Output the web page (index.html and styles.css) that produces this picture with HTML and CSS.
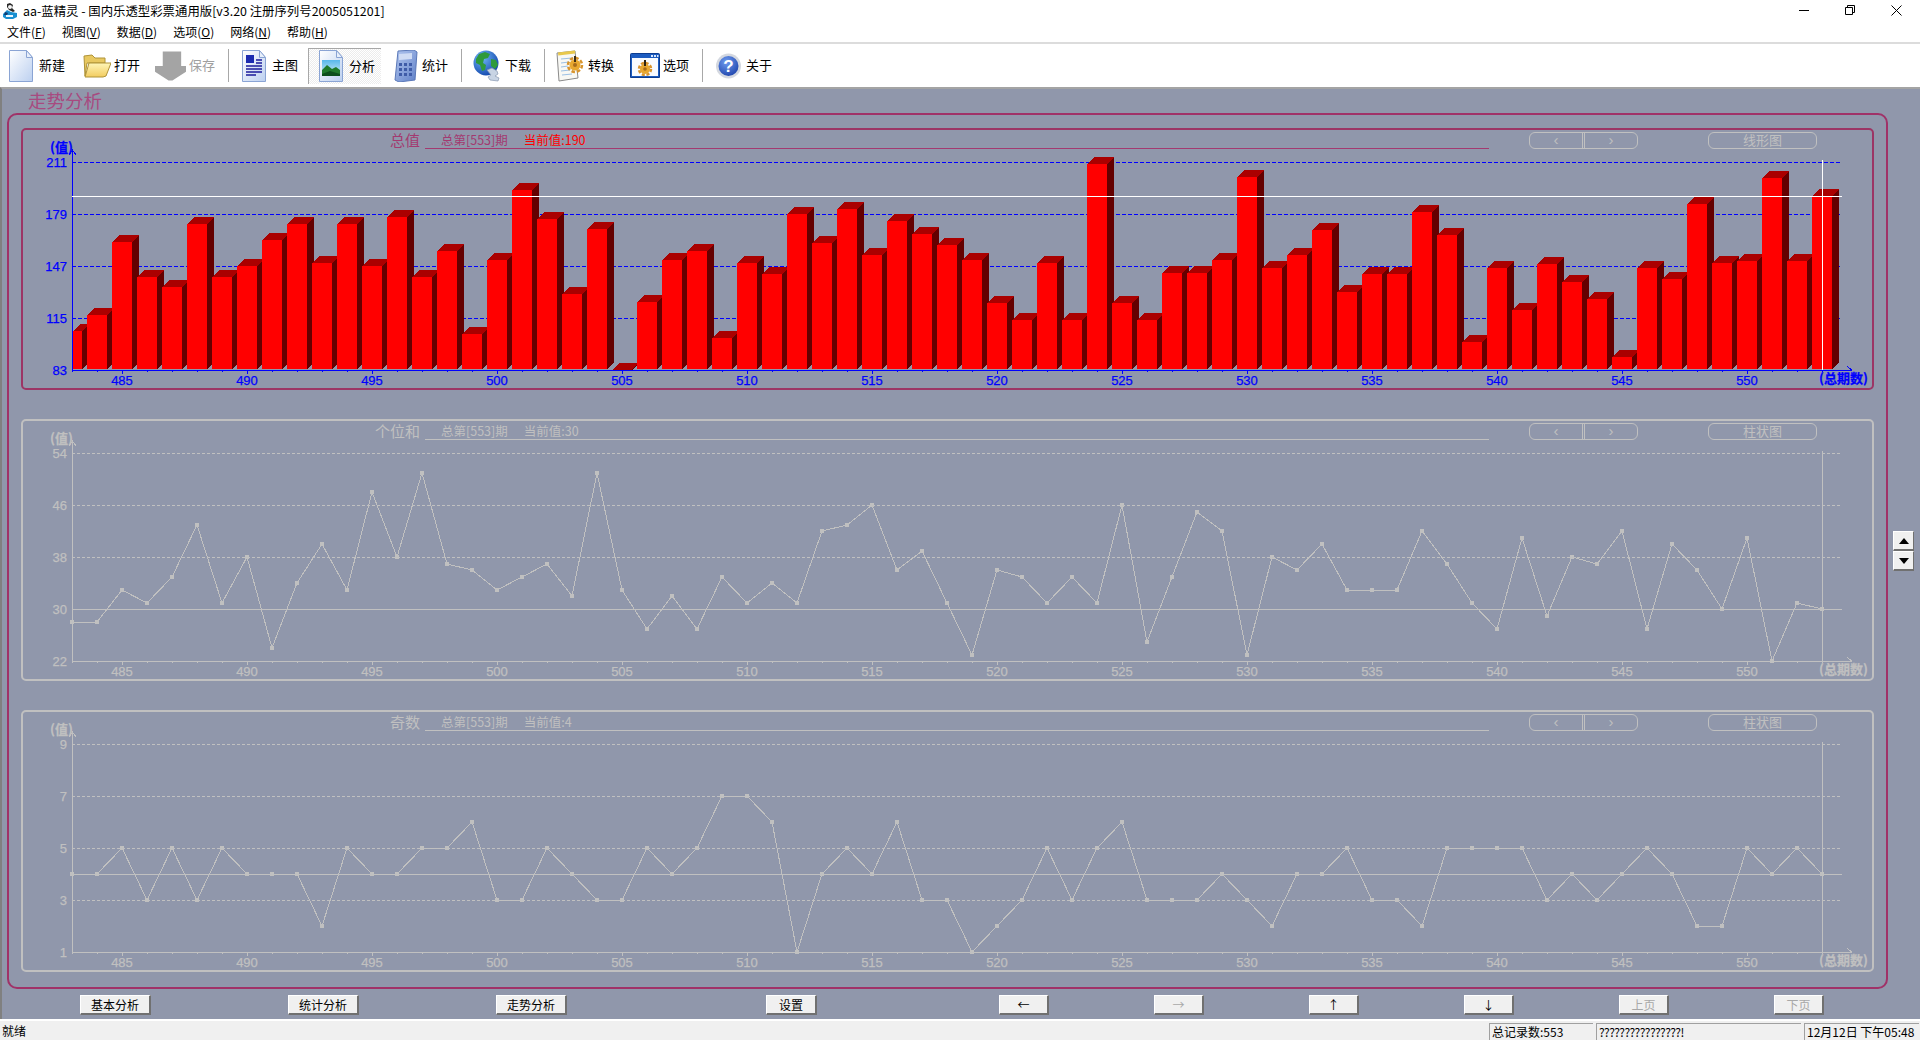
FILE: index.html
```html
<!DOCTYPE html>
<html lang="zh-CN">
<head>
  <meta charset="UTF-8" />
  <title>aa-蓝精灵</title>
  <link rel="stylesheet" href="styles.css">
</head>
<body>
  <svg class="defs" width="0" height="0">
    <defs>
      <linearGradient id="pageFill" x1="0" y1="0" x2="1" y2="1">
        <stop offset="0" stop-color="#ffffff"/>
        <stop offset="1" stop-color="#bcd0f0"/>
      </linearGradient>
      <linearGradient id="folderFill" x1="0" y1="0" x2="0" y2="1">
        <stop offset="0" stop-color="#fff6b8"/>
        <stop offset="1" stop-color="#f2cc60"/>
      </linearGradient>
      <linearGradient id="skyFill" x1="0" y1="0" x2="0" y2="1">
        <stop offset="0" stop-color="#58b8ec"/>
        <stop offset="1" stop-color="#d8f0f8"/>
      </linearGradient>
      <linearGradient id="calcFill" x1="0" y1="0" x2="1" y2="1">
        <stop offset="0" stop-color="#b4c8f0"/>
        <stop offset="1" stop-color="#5f80c8"/>
      </linearGradient>
      <radialGradient id="globeFill" cx="0.35" cy="0.3" r="0.8">
        <stop offset="0" stop-color="#70b8f8"/>
        <stop offset="1" stop-color="#0c3fa8"/>
      </radialGradient>
      <radialGradient id="helpFill" cx="0.4" cy="0.3" r="0.8">
        <stop offset="0" stop-color="#6f9cf0"/>
        <stop offset="1" stop-color="#1a3fa8"/>
      </radialGradient>
    </defs>
  </svg>

  <header class="titlebar">
    <svg class="app-icon" width="16" height="18" viewBox="0 0 16 18">
      <path d="M5 2l3-1 3 2-1 3 3 3-2 1-4-2-2-3z" fill="#2a2a2a"/>
      <circle cx="8" cy="5" r="2" fill="#f4f4f4"/>
      <path d="M1 12l4-4 4 2 6 1v4l-4 2H4l-3-2z" fill="#1a8fd0"/>
      <path d="M4 13h7v2H4z" fill="#e8f6ff"/>
      <path d="M3 10l3 1-1 2-3 0z" fill="#123a70"/>
    </svg>
    <span class="app-name">aa-蓝精灵 - 国内乐透型彩票通用版[v3.20 注册序列号2005051201]</span>
    <div class="window-btns">
      <button class="window-btn"><svg width="10" height="10" viewBox="0 0 10 10"><path d="M0 5.5h10" stroke="#000"/></svg></button>
      <button class="window-btn"><svg width="10" height="10" viewBox="0 0 10 10"><path d="M0.5 2.5h7v7h-7z M2.5 2.5v-2h7v7h-2" fill="none" stroke="#000"/></svg></button>
      <button class="window-btn"><svg width="11" height="11" viewBox="0 0 11 11"><path d="M0.5 0.5l10 10M10.5 0.5l-10 10" stroke="#000"/></svg></button>
    </div>
  </header>

  <nav class="menubar">
    <span>文件(<u>F</u>)</span>
    <span>视图(<u>V</u>)</span>
    <span>数据(<u>D</u>)</span>
    <span>选项(<u>O</u>)</span>
    <span>网络(<u>N</u>)</span>
    <span>帮助(<u>H</u>)</span>
  </nav>

  <div class="toolbar">
    <div class="tool">
      <svg width="27" height="32" viewBox="0 0 27 32">
        <path d="M0.5 0.5h17l6 7v24h-23z" fill="url(#pageFill)" stroke="#8aa4d4"/>
        <path d="M17.5 0.5v7h6z" fill="#e8effa" stroke="#8aa4d4"/>
      </svg>
      <span>新建</span>
    </div>
    <div class="tool">
      <svg width="28" height="28" viewBox="0 0 28 28">
        <path d="M1 4l8-1 3 3 10 0v5H4L2 24z" fill="#e8c860" stroke="#b09438"/>
        <path d="M2 25l4-14h22l-5 13-3 1z" fill="url(#folderFill)" stroke="#b09438"/>
      </svg>
      <span>打开</span>
    </div>
    <div class="tool tool-off">
      <svg width="31" height="30" viewBox="0 0 32 30">
        <path d="M8 0h19v15h5v6l-14 9h-4l-14-9v-6h8z" fill="#a4a4a4"/>
      </svg>
      <span>保存</span>
    </div>
    <i class="tool-sep"></i>
    <div class="tool">
      <svg width="27" height="32" viewBox="0 0 27 32">
        <path d="M0.5 0.5h17l6 7v24h-23z" fill="url(#pageFill)" stroke="#8aa4d4"/>
        <path d="M17.5 0.5v7h6z" fill="#e8effa" stroke="#8aa4d4"/>
        <path d="M4 5h8v8H4z" fill="#1c2cb0"/>
        <path d="M14 10h6M14 13h6M4 16h16M4 19h16M4 22h16M4 25h10" stroke="#1c1c9c" stroke-width="1.4"/>
      </svg>
      <span>主图</span>
    </div>
    <div class="tool tool-on">
      <svg width="27" height="32" viewBox="0 0 27 32">
        <path d="M0.5 0.5h17l6 7v24h-23z" fill="url(#pageFill)" stroke="#8aa4d4"/>
        <path d="M17.5 0.5v7h6z" fill="#e8effa" stroke="#8aa4d4"/>
        <path d="M3 10h18v16H3z" fill="url(#skyFill)"/>
        <path d="M3 20l5-5 5 4 4-2 4 3v6H3z" fill="#1f7a2c"/>
        <path d="M3 24l8-3 10 3v2H3z" fill="#0c4f1c"/>
      </svg>
      <span>分析</span>
    </div>
    <div class="tool">
      <svg width="26" height="32" viewBox="0 0 26 32">
        <path d="M5 1l16-1 3 2-2 28-16 2-4-2z" fill="url(#calcFill)" stroke="#5a78b8"/>
        <path d="M6 4l13-1v6L6 10z" fill="#d0dcf4"/>
        <g fill="#3f5ca8">
          <rect x="6" y="13" width="3" height="3"/><rect x="11" y="13" width="3" height="3"/><rect x="16" y="13" width="3" height="3"/>
          <rect x="6" y="18" width="3" height="3"/><rect x="11" y="18" width="3" height="3"/><rect x="16" y="18" width="3" height="3"/>
          <rect x="6" y="23" width="3" height="3"/><rect x="11" y="23" width="3" height="3"/><rect x="16" y="23" width="3" height="3"/>
        </g>
      </svg>
      <span>统计</span>
    </div>
    <i class="tool-sep"></i>
    <div class="tool">
      <svg width="29" height="32" viewBox="0 0 29 32">
        <circle cx="13" cy="13" r="12.5" fill="url(#globeFill)"/>
        <path d="M6 4l6-2 5 2-2 4-4 1-1 4 3 2-1 5-3 1-2-6-4-2 0-4z" fill="#2f9a3c"/>
        <path d="M18 9l5 1 2 5-3 4-4-3z" fill="#2f9a3c"/>
        <path d="M14 20l5-2 5 3 1 3-3 2 4 2-1 3-8-1-2-3 3-2z" fill="#c8d4e4" stroke="#8898b0" stroke-width="0.7"/>
      </svg>
      <span>下载</span>
    </div>
    <i class="tool-sep"></i>
    <div class="tool">
      <svg width="29" height="32" viewBox="0 0 29 32">
        <path d="M1 3l18-2 3 27-19 3z" fill="#f8f8f4" stroke="#8a8a8a"/>
        <path d="M2 2.5l17-2 .3 3-17 2z" fill="#e8c84c"/>
        <path d="M5 9l11-1M5 13l8-1M5 17l7-1M5 21l9-1M6 25l10-1" stroke="#9cc0e4"/>
        <circle cx="19" cy="15" r="5.5" fill="#e8a830"/>
        <circle cx="19" cy="15" r="7" fill="none" stroke="#d8942c" stroke-width="2.5" stroke-dasharray="3.5 2"/>
        <circle cx="19" cy="15" r="2" fill="#a86c1c"/>
        <path d="M19 6v6" stroke="#3c2c14" stroke-width="2"/>
      </svg>
      <span>转换</span>
    </div>
    <div class="tool">
      <svg width="30" height="25" viewBox="0 0 30 25">
        <path d="M0.5 1.5q0-1 1-1h27q1 0 1 1v23h-29z" fill="#1c5cc0" stroke="#0c3c90"/>
        <path d="M2 5h26v18H2z" fill="#f8fbff"/>
        <path d="M21 2h2v2h-2zM24 2h2v2h-2zM27 2h1.500v2H27z" fill="#d8e8ff"/>
        <circle cx="15" cy="16" r="5" fill="#e8a830"/>
        <circle cx="15" cy="16" r="6" fill="none" stroke="#d8942c" stroke-width="2.500" stroke-dasharray="3 1.700"/>
        <circle cx="15" cy="16" r="1.800" fill="#a86c1c"/>
        <path d="M15 7v6" stroke="#2c2414" stroke-width="2"/>
      </svg>
      <span>选项</span>
    </div>
    <i class="tool-sep"></i>
    <div class="tool">
      <svg width="27" height="26" viewBox="0 0 27 26">
        <circle cx="12.500" cy="13" r="12.500" fill="#d4d8e0"/>
        <circle cx="12.500" cy="13" r="10" fill="url(#helpFill)"/>
        <text class="help-mark" x="12.500" y="19">?</text>
      </svg>
      <span>关于</span>
    </div>
  </div>

  <main class="client">
    <h1 class="page-title">走势分析</h1>
    <div class="client-row">
      <section class="outer">
        <article class="panel panel-active">
          <div class="panel-head">
            <span class="panel-title">总值</span>
            <div class="panel-info">
              <span>总第[553]期</span>
              <span class="panel-now">当前值:190</span>
            </div>
            <div class="pager"><span>‹</span><span>›</span></div>
            <div class="chart-switch">线形图</div>
          </div>
          <svg class="chart chart-blue" id="chartTotal" width="1849" height="239"></svg>
        </article>

        <article class="panel">
          <div class="panel-head">
            <span class="panel-title">个位和</span>
            <div class="panel-info">
              <span>总第[553]期</span>
              <span class="panel-now">当前值:30</span>
            </div>
            <div class="pager"><span>‹</span><span>›</span></div>
            <div class="chart-switch">柱状图</div>
          </div>
          <svg class="chart chart-gray" id="chartUnits" width="1849" height="239"></svg>
        </article>

        <article class="panel">
          <div class="panel-head">
            <span class="panel-title">奇数</span>
            <div class="panel-info">
              <span>总第[553]期</span>
              <span class="panel-now">当前值:4</span>
            </div>
            <div class="pager"><span>‹</span><span>›</span></div>
            <div class="chart-switch">柱状图</div>
          </div>
          <svg class="chart chart-gray" id="chartOdd" width="1849" height="239"></svg>
        </article>
      </section>

      <div class="spin">
        <button class="spin-btn"><svg width="10" height="6" viewBox="0 0 10 6"><path d="M5 0l5 6H0z"/></svg></button>
        <button class="spin-btn"><svg width="10" height="6" viewBox="0 0 10 6"><path d="M0 0h10L5 6z"/></svg></button>
      </div>
    </div>

    <div class="actions">
      <div class="actions-main">
        <button class="btn btn-wide">基本分析</button>
        <button class="btn btn-wide">统计分析</button>
        <button class="btn btn-wide">走势分析</button>
      </div>
      <button class="btn btn-setup">设置</button>
      <div class="actions-nav">
        <button class="btn">←</button>
        <button class="btn btn-off">→</button>
        <button class="btn">↑</button>
        <button class="btn">↓</button>
        <button class="btn btn-off">上页</button>
        <button class="btn btn-off">下页</button>
      </div>
    </div>
  </main>

  <footer class="statusbar">
    <span class="status-text">就绪</span>
    <span class="status-pane pane-count">总记录数:553</span>
    <span class="status-pane pane-msg">????????????????!</span>
    <span class="status-pane pane-time">12月12日 下午05:48</span>
  </footer>

  <script src="charts.js"></script>
</body>
</html>
```

FILE: styles.css
```css
/* Basic reset */
* {
  margin: 0;
  padding: 0;
  box-sizing: border-box;
}

body {
  width: 1920px;
  height: 1040px;
  overflow: hidden;
  display: flex;
  flex-direction: column;
  background-color: #ffffff;
  color: #000000;
  font-family: "Noto Sans CJK SC", "Liberation Sans", sans-serif;
  font-size: 12px;
}

.defs {
  display: block;
}

/* Title bar */
.titlebar {
  height: 22px;
  display: flex;
  align-items: center;
}
.app-icon {
  margin-left: 2px;
}
.app-name {
  margin-left: 5px;
  font-size: 12.4px;
  white-space: nowrap;
}
.window-btns {
  margin-left: auto;
  display: flex;
  margin-right: 1px;
  align-self: flex-start;
}
.window-btn {
  width: 46px;
  height: 20px;
  display: flex;
  align-items: center;
  justify-content: center;
  border: none;
  background: none;
}

/* Menu */
.menubar {
  height: 22px;
  padding: 0 0 2px 7px;
  display: flex;
  align-items: center;
  gap: 16px;
  border-bottom: 2px solid #dcdcdc;
}

/* Toolbar */
.toolbar {
  height: 43px;
  padding-left: 9px;
  display: grid;
  grid-template-columns: 74px 72px 73px 14px 66px 85px 68px 12px 71px 12px 74px 72px 14px auto;
  align-items: center;
  font-size: 13px;
}
.tool {
  display: flex;
  align-items: center;
  gap: 3px;
  justify-self: start;
}
.tool span {
  margin-top: -2px;
}
.tool-off {
  color: #a0a0a0;
}
.tool-on {
  width: 73px;
  height: 36px;
  padding-left: 10px;
  border-top: 1px solid #a8a8a8;
  border-left: 1px solid #a8a8a8;
  background-color: #f6f6f6;
  background-image: repeating-conic-gradient(#ececec 0 25%, #ffffff 0 50%);
  background-size: 2px 2px;
}
.tool-sep {
  width: 1px;
  height: 33px;
  background-color: #a8a8a8;
}
.help-mark {
  font-family: "Liberation Sans", sans-serif;
  font-size: 17px;
  font-weight: bold;
  fill: #ffffff;
  text-anchor: middle;
}

/* Client area */
.client {
  flex: 1;
  background-color: #9097ab;
  border-top: 2px solid #a4a4a4;
  border-left: 2px solid #808080;
  padding-left: 5px;
}
.page-title {
  height: 24px;
  padding-left: 21px;
  font-size: 18.5px;
  font-weight: normal;
  line-height: 22px;
  color: #a84a80;
}
.client-row {
  display: flex;
  align-items: flex-start;
}

/* Maroon frame around the charts */
.outer {
  width: 1881px;
  padding: 13px 12px 15px;
  display: flex;
  flex-direction: column;
  gap: 29px;
  border: 2px solid #a03268;
  border-radius: 10px;
}

.panel {
  height: 262px;
  border: 2px solid #c0c0c0;
  border-radius: 5px;
  color: #c0c0c0;
}
.panel-active {
  border-color: #9c3565;
}

.panel-head {
  height: 19px;
  display: flex;
  align-items: flex-start;
}
.panel-title {
  width: 397px;
  font-size: 15px;
  line-height: 19px;
  text-align: right;
}
.panel-active .panel-title,
.panel-active .panel-info {
  color: #a33a70;
}
.panel-info {
  width: 1064px;
  height: 19px;
  margin-left: 5px;
  padding-left: 16px;
  display: flex;
  gap: 16px;
  font-size: 12.5px;
  line-height: 19px;
  border-bottom: 1px solid currentColor;
}
.panel-active .panel-now {
  color: #ff0000;
}

.pager,
.chart-switch {
  width: 109px;
  height: 17px;
  margin-top: 2px;
  border: 1px solid #c0c0c0;
  border-radius: 6px;
  color: #c0c0c0;
}
.pager {
  margin-left: 40px;
  display: flex;
}
.pager span {
  flex: 1;
  text-align: center;
  font-family: "Liberation Sans", sans-serif;
  font-size: 15px;
  line-height: 13px;
}
.pager span:first-child {
  border-right: 3px double #c0c0c0;
}
.chart-switch {
  margin-left: 70px;
  text-align: center;
  font-size: 13px;
  line-height: 14px;
}

/* Charts */
.chart {
  display: block;
  overflow: visible;
  shape-rendering: crispEdges;
}
.chart-blue {
  color: #0000ff;
}
.chart-gray {
  color: #c0c0c0;
}
.chart text {
  fill: currentColor;
  stroke: currentColor;
  stroke-width: 0.25px;
  font-family: "Liberation Sans", sans-serif;
  font-size: 13px;
}
.chart .axis-y {
  text-anchor: end;
}
.chart .axis-x {
  text-anchor: middle;
}
.chart .axis-name {
  font-family: "Noto Sans CJK SC", sans-serif;
  font-size: 13px;
  font-weight: bold;
}

/* Small arrows right of the frame */
.spin {
  margin: 418px 0 0 5px;
  display: flex;
  flex-direction: column;
}
.spin-btn {
  width: 21px;
  height: 20px;
  display: flex;
  align-items: center;
  justify-content: center;
  background-color: #f0f0f0;
  border: 1px solid;
  border-color: #ffffff #707070 #707070 #ffffff;
  border-bottom-width: 2px;
}

/* Bottom buttons */
.actions {
  margin-top: 6px;
  padding-left: 73px;
  display: flex;
}
.actions-main {
  display: flex;
  gap: 137px;
}
.btn {
  width: 50px;
  height: 20px;
  font-family: inherit;
  font-size: 12px;
  background-color: #f0f0f0;
  border: 1px solid;
  border-color: #ffffff #707070 #707070 #ffffff;
  border-bottom-width: 2px;
  border-right-width: 2px;
}
.btn-wide {
  width: 71px;
}
.btn-setup {
  width: 51px;
  margin-left: 199px;
}
.btn-off {
  color: #a8a8a8;
}
.actions-nav {
  margin-left: 182px;
  display: flex;
  gap: 105px;
}

/* Status bar */
.statusbar {
  height: 21px;
  display: flex;
  gap: 3px;
  align-items: flex-end;
  background-color: #f0f0f0;
  border-top: 2px solid #ffffff;
  padding-right: 1px;
}
.status-text {
  margin-right: auto;
  padding-left: 2px;
  line-height: 19px;
  height: 19px;
}
.status-pane {
  height: 17px;
  line-height: 16px;
  padding-left: 2px;
  white-space: nowrap;
  overflow: hidden;
  border-top: 1px solid #a0a0a0;
  border-left: 1px solid #a0a0a0;
}
.pane-count {
  width: 104px;
}
.pane-msg {
  width: 205px;
  letter-spacing: -0.6px;
}
.pane-time {
  width: 115px;
}
```

FILE: charts.js
```js
// Three trend charts. Periods 483..553, 25px per period, 52px between grid lines.
const FIRST_PERIOD = 483;
const LAST_PERIOD = 553;
const AXIS_X = 49;
const BASELINE = 221;
const GRID_END = 1818;

const totals = [
  107, 117, 162, 140, 134, 173, 140, 147, 163, 173, 149, 173, 147, 177, 140, 156, 105, 151,
  194, 176, 130, 170, 83, 125, 151, 156, 103, 149, 142, 179, 161, 182, 154, 175, 167, 160,
  151, 124, 114, 149, 114, 210, 124, 114, 143, 143, 151, 202, 146, 154, 169, 131, 142, 142,
  180, 166, 100, 146, 120, 148, 137, 127, 91, 146, 139, 185, 149, 150, 201, 150, 190
];

const units = [
  28, 28, 33, 31, 35, 43, 31, 38, 24, 34, 40, 33, 48, 38, 51, 37, 36, 33, 35, 37, 32, 51, 33, 27,
  32, 27, 35, 31, 34, 31, 42, 43, 46, 36, 39, 31, 23, 36, 35, 31, 35, 31, 46, 25, 35, 45, 42, 23,
  38, 36, 40, 33, 33, 33, 42, 37, 31, 27, 41, 29, 38, 37, 42, 27, 40, 36, 30, 41, 22, 31, 30
];

const odds = [
  4, 4, 5, 3, 5, 3, 5, 4, 4, 4, 2, 5, 4, 4, 5, 5, 6, 3, 3, 5, 4, 3, 3, 5, 4, 5, 7, 7, 6, 1, 4, 5,
  4, 6, 3, 3, 1, 2, 3, 5, 3, 5, 6, 3, 3, 3, 4, 3, 2, 4, 4, 5, 3, 3, 2, 5, 5, 5, 5, 3, 4, 3, 4, 5,
  4, 2, 2, 5, 4, 5, 4
];

function periodX(period) {
  return 99 + 25 * (period - 485);
}

// Shared grid and labels. Returns the markup and the function that turns a value into y.
function drawFrame(config) {
  const { min, step, dash } = config;
  const valueY = value => BASELINE - ((value - min) / step) * 52;
  let parts = "";

  for (let i = 0; i <= 4; i++) {
    const y = BASELINE - i * 52;
    const label = min + i * step;
    if (i > 0) {
      parts += `<path d="M${AXIS_X} ${y + 0.5}H${GRID_END}" stroke="currentColor" stroke-dasharray="${dash}"/>`;
    }
    parts += `<text class="axis-y" x="44" y="${y + 5}">${label}</text>`;
  }

  for (let period = FIRST_PERIOD; period <= LAST_PERIOD; period++) {
    const x = periodX(period);
    const major = period % 5 === 0;
    parts += `<path d="M${x + 0.5} ${BASELINE}v${major ? 4 : 2}" stroke="currentColor"/>`;
    if (major) {
      parts += `<text class="axis-x" x="${x}" y="236">${period}</text>`;
    }
  }

  parts += `<text class="axis-name" x="27" y="3">(值)</text>`;
  parts += `<text class="axis-name" x="1796" y="234">(总期数)</text>`;
  return { parts, valueY };
}

function drawAxes() {
  return `<path d="M${AXIS_X + 0.5} ${BASELINE + 1}V1M${AXIS_X - 3} 6L${AXIS_X + 0.5} 1L${AXIS_X + 4} 6" fill="none" stroke="currentColor"/>` +
    `<path d="M${AXIS_X} ${BASELINE + 0.5}H1829M1824 ${BASELINE - 4}L1829 ${BASELINE + 0.5}" fill="none" stroke="currentColor"/>`;
}

function drawCurrent(y, color) {
  const x = periodX(LAST_PERIOD) + 0.5;
  return `<path d="M${AXIS_X} ${y + 0.5}H1819M${x} 11V${BASELINE}" stroke="${color}"/>`;
}

function drawBars(svg, values, config) {
  const { parts, valueY } = drawFrame(config);
  let bars = "";

  values.forEach((value, i) => {
    const center = periodX(FIRST_PERIOD + i);
    const left = Math.max(center - 10, AXIS_X + 1);
    const right = center + 10;
    const top = Math.round(valueY(value));
    const bottom = BASELINE - 1;
    const d = 7;
    bars += `<path d="M${left} ${top}l${d} ${-d}H${right + d}L${right} ${top}z" fill="#aa0000"/>`;
    bars += `<path d="M${right} ${top}L${right + d} ${top - d}V${bottom - d}L${right} ${bottom}z" fill="#640000"/>`;
    if (bottom > top) {
      bars += `<rect x="${left}" y="${top}" width="${right - left}" height="${bottom - top}" fill="#ff0000"/>`;
    }
  });

  const current = Math.round(valueY(values[values.length - 1]));
  svg.innerHTML = parts + bars + drawAxes() + drawCurrent(current, "#ffffff");
}

function drawLine(svg, values, config) {
  const { parts, valueY } = drawFrame(config);
  const points = values.map((value, i) => [periodX(FIRST_PERIOD + i), Math.round(valueY(value))]);
  const line = `<polyline points="${points.map(p => p.join(",")).join(" ")}" fill="none" stroke="#c0c0c0"/>`;
  const marks = points
    .map(([x, y]) => `<rect x="${x - 2}" y="${y - 2}" width="4" height="4" fill="#c0c0c0"/>`)
    .join("");

  const current = Math.round(valueY(values[values.length - 1]));
  svg.innerHTML = parts + drawAxes() + drawCurrent(current, "#c0c0c0") + line + marks;
}

drawBars(document.getElementById("chartTotal"), totals, { min: 83, step: 32, dash: "4 2" });
drawLine(document.getElementById("chartUnits"), units, { min: 22, step: 8, dash: "3 2" });
drawLine(document.getElementById("chartOdd"), odds, { min: 1, step: 2, dash: "3 2" });
```
